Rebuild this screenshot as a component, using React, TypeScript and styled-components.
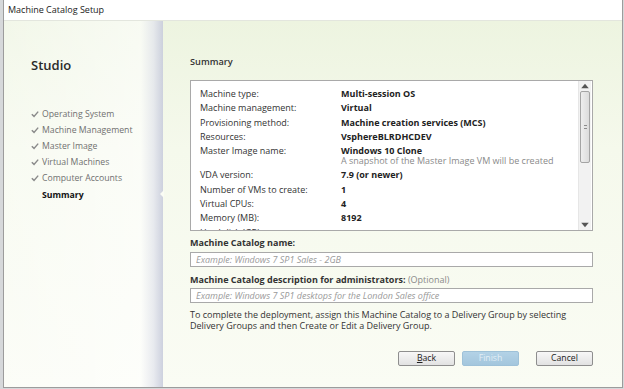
import styled, { createGlobalStyle } from "styled-components";

const GlobalStyle = createGlobalStyle`
  html, body {
    margin: 0;
    padding: 0;
    background: #d6d8da;
  }
  body {
    font-family: "Open Sans", "Noto Sans", "Liberation Sans", sans-serif;
  }
`;

type Row = { label: string; value: string; note?: string };

const rows: Row[] = [
  { label: "Machine type:", value: "Multi-session OS" },
  { label: "Machine management:", value: "Virtual" },
  { label: "Provisioning method:", value: "Machine creation services (MCS)" },
  { label: "Resources:", value: "VsphereBLRDHCDEV" },
  {
    label: "Master Image name:",
    value: "Windows 10 Clone",
    note: "A snapshot of the Master Image VM will be created",
  },
  { label: "VDA version:", value: "7.9 (or newer)" },
  { label: "Number of VMs to create:", value: "1" },
  { label: "Virtual CPUs:", value: "4" },
  { label: "Memory (MB):", value: "8192" },
  { label: "Hard disk (GB):", value: "50" },
  { label: "Computer accounts:", value: "Create new accounts" },
];

const steps = [
  "Operating System",
  "Machine Management",
  "Master Image",
  "Virtual Machines",
  "Computer Accounts",
];

export default function App() {
  return (
    <>
      <GlobalStyle />
      <Screen>
        <Window>
          <TitleBar>Machine Catalog Setup</TitleBar>
          <Body>
            <Sidebar>
              <Brand>Studio</Brand>
              <StepList>
                {steps.map((s) => (
                  <Step key={s}>
                    <Check viewBox="0 0 10 10">
                      <path d="M1 5.4 L3.8 8 L9 2" />
                    </Check>
                    {s}
                  </Step>
                ))}
                <Step $active>Summary</Step>
              </StepList>
            </Sidebar>
            <Main>
              <Heading>Summary</Heading>
              <SummaryBox>
                <SummaryGrid>
                  {rows.map((r) => (
                    <SummaryRow key={r.label}>
                      <Label>{r.label}</Label>
                      <Value>
                        {r.value}
                        {r.note && <Note>{r.note}</Note>}
                      </Value>
                    </SummaryRow>
                  ))}
                </SummaryGrid>
                <ScrollBar>
                  <Arrow viewBox="0 0 8 6">
                    <path d="M1.5 4.5 L4 1.5 L6.5 4.5 Z" />
                  </Arrow>
                  <Track>
                    <Thumb>
                      <Grip />
                    </Thumb>
                  </Track>
                  <Arrow viewBox="0 0 8 6">
                    <path d="M1.5 1.5 L4 4.5 L6.5 1.5 Z" />
                  </Arrow>
                </ScrollBar>
              </SummaryBox>

              <FieldLabel>Machine Catalog name:</FieldLabel>
              <TextInput placeholder="Example: Windows 7 SP1 Sales - 2GB" />

              <FieldLabel $gap={7}>
                Machine Catalog description for administrators:{" "}
                <Optional>(Optional)</Optional>
              </FieldLabel>
              <TextInput placeholder="Example: Windows 7 SP1 desktops for the London Sales office" />

              <Info>
                To complete the deployment, assign this Machine Catalog to a
                Delivery Group by selecting Delivery Groups and then Create or
                Edit a Delivery Group.
              </Info>

              <Buttons>
                <Button>
                  <u>B</u>ack
                </Button>
                <Button $primary disabled>
                  Finish
                </Button>
                <Button $spaced>Cancel</Button>
              </Buttons>
            </Main>
          </Body>
        </Window>
      </Screen>
    </>
  );
}

const Screen = styled.div`
  width: 624px;
  height: 389px;
  display: flex;
  padding-left: 3px;
  box-sizing: border-box;
  overflow: hidden;
`;

const Window = styled.div`
  width: 620px;
  height: 388px;
  display: flex;
  flex-direction: column;
  background: #fff;
  border: 1px solid #9c9c9c;
  border-top: none;
  box-sizing: border-box;
`;

const TitleBar = styled.div`
  height: 20px;
  line-height: 20px;
  padding-left: 4px;
  font-size: 9px;
  color: #1b1b1b;
  background: #fff;
  border-bottom: 1px solid #e3e6de;
`;

const Body = styled.div`
  flex: 1;
  display: flex;
  background: linear-gradient(180deg, #edf4e0 0%, #f5f9ec 35%, #fafcf4 100%);
`;

const Sidebar = styled.div`
  width: 159px;
  padding: 36px 0 0 27px;
  box-sizing: border-box;
  background: linear-gradient(
    90deg,
    rgba(255, 255, 255, 0.3) 0%,
    rgba(255, 255, 255, 0.6) 86%,
    rgba(228, 230, 238, 0.8) 94%,
    rgba(200, 204, 220, 0.9) 100%
  );
`;

const Brand = styled.div`
  font-size: 13px;
  font-weight: 600;
  color: #2a2a2a;
  line-height: 16px;
`;

const StepList = styled.div`
  display: flex;
  flex-direction: column;
  margin-top: 32.5px;
`;

const Step = styled.div<{ $active?: boolean }>`
  position: relative;
  height: 16.2px;
  line-height: 16px;
  font-size: 8.7px;
  display: flex;
  align-items: center;
  padding-left: ${(p) => (p.$active ? "11px" : "0")};
  color: ${(p) => (p.$active ? "#111" : "#707070")};
  font-weight: ${(p) => (p.$active ? 700 : 400)};

  ${(p) =>
    p.$active &&
    `
    &::after {
      content: "";
      position: absolute;
      right: -1px;
      top: 4px;
      border-style: solid;
      border-width: 4px 4px 4px 0;
      border-color: transparent #fafcf4 transparent transparent;
    }
  `}
`;

const Check = styled.svg`
  width: 8px;
  height: 8px;
  margin-right: 3px;
  fill: none;
  stroke: #8a8a8a;
  stroke-width: 1.8;
`;

const Main = styled.div`
  flex: 1;
  display: flex;
  flex-direction: column;
  padding: 35px 29px 0 27px;
`;

const Heading = styled.div`
  font-size: 9.2px;
  font-weight: 600;
  color: #333;
  line-height: 12px;
`;

const SummaryBox = styled.div`
  margin-top: 12px;
  height: 151px;
  display: flex;
  background: #fff;
  border: 1px solid #a9a9a9;
  box-sizing: border-box;
  overflow: hidden;
`;

const SummaryGrid = styled.div`
  flex: 1;
  display: flex;
  flex-direction: column;
  gap: 4.3px;
  padding: 8px 0 0 9px;
`;

const SummaryRow = styled.div`
  display: grid;
  grid-template-columns: 141px 1fr;
  font-size: 9px;
  line-height: 10px;
`;

const Label = styled.div`
  color: #333;
`;

const Value = styled.div`
  color: #222;
  font-weight: 700;
`;

const Note = styled.div`
  font-weight: 400;
  color: #8a8a8a;
`;

const ScrollBar = styled.div`
  width: 12px;
  margin-right: 1px;
  display: flex;
  flex-direction: column;
  background: #f2f2f2;
  border-left: 1px solid #e6e6e6;
`;

const Arrow = styled.svg`
  width: 12px;
  height: 10px;
  fill: #555;
`;

const Track = styled.div`
  flex: 1;
  padding: 0 1px;
`;

const Thumb = styled.div`
  height: 72px;
  display: flex;
  align-items: center;
  justify-content: center;
  border: 1px solid #a4a4a4;
  border-radius: 2px;
  background: linear-gradient(90deg, #eeeeee, #dcdcdc);
  box-sizing: border-box;
`;

const Grip = styled.div`
  width: 3px;
  height: 4px;
  border-top: 1px solid #8c8c8c;
  border-bottom: 1px solid #8c8c8c;
  box-sizing: border-box;
`;

const FieldLabel = styled.div<{ $gap?: number }>`
  margin-top: ${(p) => p.$gap ?? 6}px;
  font-size: 9px;
  font-weight: 700;
  color: #333;
  line-height: 11px;
`;

const Optional = styled.span`
  font-weight: 400;
  color: #8a8a8a;
`;

const TextInput = styled.input`
  margin-top: 3.5px;
  height: 15px;
  width: 100%;
  padding: 0 5px;
  box-sizing: border-box;
  border: 1px solid #a9a9a9;
  background: #fff;
  font-family: inherit;
  font-size: 9px;
  outline: none;

  &::placeholder {
    color: #9a9a9a;
    font-style: italic;
  }
`;

const Info = styled.p`
  margin: 7px 0 0;
  font-size: 9px;
  line-height: 10.5px;
  color: #333;
`;

const Buttons = styled.div`
  margin-top: 20px;
  display: flex;
  justify-content: flex-end;
  gap: 7px;
`;

const Button = styled.button<{ $primary?: boolean; $spaced?: boolean }>`
  width: 57px;
  height: 15px;
  padding: 0;
  margin-left: ${(p) => (p.$spaced ? "10px" : "0")};
  font-family: inherit;
  font-size: 8.7px;
  line-height: 13px;
  border-radius: 2px;
  box-sizing: border-box;
  border: 1px solid ${(p) => (p.$primary ? "#9ec1d8" : "#8e8e8e")};
  color: ${(p) => (p.$primary ? "#e2eef6" : "#222")};
  background: ${(p) =>
    p.$primary
      ? "linear-gradient(180deg, #b3d2e6, #a3c6dd)"
      : "linear-gradient(180deg, #f7f7f7, #e2e2e2)"};
`;
